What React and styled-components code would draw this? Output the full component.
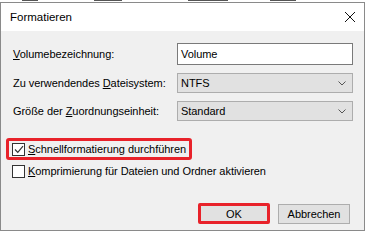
import React from 'react';
import styled, { createGlobalStyle } from 'styled-components';

const GlobalStyle = createGlobalStyle`
    body {
        margin: 0;
        background: #ffffff;
        font-family: "Liberation Sans", Arial, sans-serif;
    }
`

const Page = styled.div`
    width: 367px;
    height: 240px;
    overflow: hidden;
    background: #ffffff;
`

// bits of the window that lies behind the dialog
const BackStrip = styled.div`
    height: 2px;
    display: flex;
    gap: 6px;
    padding-left: 22px;
`

const Fragment = styled.i`
    display: block;
    width: ${p => p.$w}px;
    height: 1px;
    margin-left: ${p => p.$gap || 0}px;
    background: #555;
`

const Dialog = styled.div`
    width: 363px;
    height: 227px;
    border: 1px solid #8a8a8a;
    background: #f0f0f0;
    display: flex;
    flex-direction: column;
`

const TitleBar = styled.div`
    height: 28px;
    background: #ffffff;
    display: flex;
    align-items: center;
    justify-content: space-between;
    padding: 0 8px 0 9px;
    font-size: 11.5px;
    color: #000;
`

const Body = styled.div`
    flex: 1;
    padding: 12px 11px 0 11px;
    font-size: 11px;
    letter-spacing: -0.05px;
    color: #000;
`

const FormGrid = styled.div`
    display: grid;
    grid-template-columns: 1fr 176px;
    row-gap: 8px;
    align-items: center;
`

const Label = styled.div`
    padding-left: 1px;
`

const TextBox = styled.div`
    height: 20px;
    border: 1px solid #7a7a7a;
    background: #ffffff;
    display: flex;
    align-items: center;
    padding-left: 3px;
`

const Select = styled.div`
    height: 18px;
    border: 1px solid #adadad;
    background: #e1e1e1;
    display: flex;
    align-items: center;
    justify-content: space-between;
    padding: 0 6px 0 3px;
`

const Checks = styled.div`
    margin-top: 17px;
    display: flex;
    flex-direction: column;
    gap: 3px;
`

const Highlight = styled.div`
    width: fit-content;
    margin-left: -6px;
    padding: 0 3px 0 3px;
    border: 3px solid #e8222a;
    border-radius: 3px;
`

const CheckRow = styled.div`
    display: flex;
    align-items: center;
    gap: 3px;
    height: 16px;
`

const Box = styled.div`
    width: 11px;
    height: 11px;
    border: 1px solid #333;
    background: #fff;
    display: flex;
    align-items: center;
    justify-content: center;
`

const Buttons = styled.div`
    margin-top: 24px;
    display: flex;
    justify-content: flex-end;
    gap: 8px;
    padding-right: 3px;
`

const Button = styled.div`
    box-sizing: border-box;
    width: 72px;
    height: ${p => p.$hot ? 21 : 20}px;
    margin-top: ${p => p.$hot ? 0 : 1}px;
    border: ${p => p.$hot ? '3px solid #e8222a' : '1px solid #adadad'};
    border-radius: ${p => p.$hot ? 2 : 0}px;
    background: #e1e1e1;
    display: flex;
    align-items: center;
    justify-content: center;
`

const Chevron = () => (
    <svg width="8" height="5" viewBox="0 0 8 5">
        <path d="M0.5 0.5 L4 4 L7.5 0.5" fill="none" stroke="#555" strokeWidth="1" />
    </svg>
)

const Close = () => (
    <svg width="12" height="12" viewBox="0 0 12 12">
        <path d="M1 1 L11 11 M11 1 L1 11" stroke="#111" strokeWidth="1" />
    </svg>
)

const Check = () => (
    <svg width="10" height="9" viewBox="0 0 10 9">
        <path d="M1 4.5 L3.8 7.3 L9 1.2" fill="none" stroke="#333" strokeWidth="1.2" />
    </svg>
)

export default function App(){
    return(
        <Page>
            <GlobalStyle />
            <BackStrip>
                <Fragment $w={16} />
                <Fragment $w={28} $gap={50} />
                <Fragment $w={40} $gap={60} />
                <Fragment $w={26} $gap={36} />
            </BackStrip>
            <Dialog>
                <TitleBar>
                    <span>Formatieren</span>
                    <Close />
                </TitleBar>
                <Body>
                    <FormGrid>
                        <Label><u>V</u>olumebezeichnung:</Label>
                        <TextBox>Volume</TextBox>
                        <Label>Zu verwendendes <u>D</u>ateisystem:</Label>
                        <Select><span>NTFS</span><Chevron /></Select>
                        <Label>Größe der <u>Z</u>uordnungseinheit:</Label>
                        <Select><span>Standard</span><Chevron /></Select>
                    </FormGrid>
                    <Checks>
                        <Highlight>
                            <CheckRow>
                                <Box><Check /></Box>
                                <span><u>S</u>chnellformatierung durchführen</span>
                            </CheckRow>
                        </Highlight>
                        <CheckRow>
                            <Box />
                            <span><u>K</u>omprimierung für Dateien und Ordner aktivieren</span>
                        </CheckRow>
                    </Checks>
                    <Buttons>
                        <Button $hot>OK</Button>
                        <Button>Abbrechen</Button>
                    </Buttons>
                </Body>
            </Dialog>
        </Page>
    );
}
